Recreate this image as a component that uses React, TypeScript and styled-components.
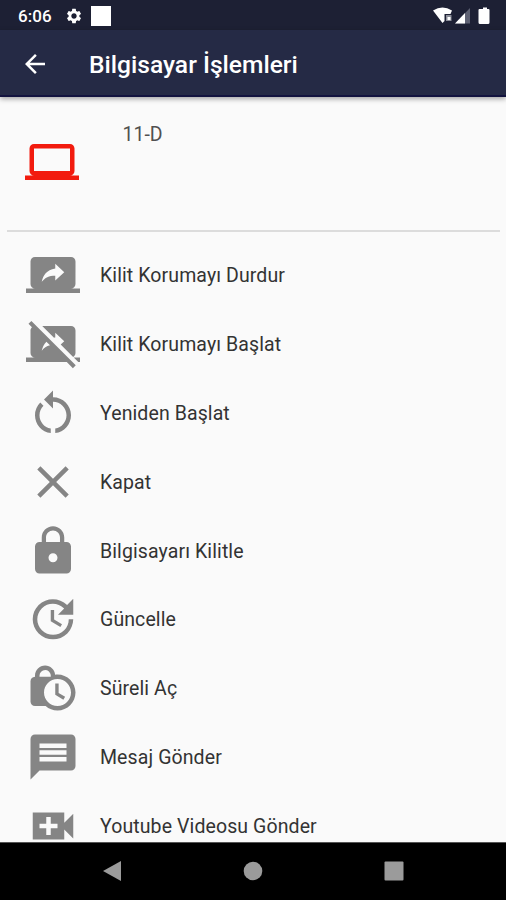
import React from 'react';
import styled, { createGlobalStyle } from 'styled-components';
import {
  MdArrowBack, MdClose, MdLaptop, MdLock, MdLockClock, MdMessage, MdRestartAlt,
  MdScreenShare, MdSettings, MdStopScreenShare, MdUpdate,
} from 'react-icons/md';

const GlobalStyle = createGlobalStyle`
  * { box-sizing: border-box; }
  body { margin: 0; background: #fafafa; font-family: Roboto, "Liberation Sans", sans-serif; }
`;

const Screen = styled.div`
  display: flex;
  flex-direction: column;
  width: 506px;
  height: 900px;
  overflow: hidden;
  background: #fafafa;
`;

const StatusBar = styled.div`
  flex: none;
  display: flex;
  align-items: center;
  height: 30px;
  padding: 1px 15px 0 18px;
  background: #1d2034;
  color: #fff;
`;

const Clock = styled.span`
  width: 47px;
  font-size: 17px;
  font-weight: 500;
  line-height: 28px;
  letter-spacing: 0.1px;
`;

const Notice = styled.div`
  width: 20px;
  height: 20px;
  margin-left: 8px;
  background: #fff;
`;

const StatusIcons = styled.svg`
  margin-left: auto;
`;

const AppBar = styled.header`
  flex: none;
  z-index: 1;
  display: flex;
  align-items: center;
  height: 67px;
  padding: 3px 20px 0;
  background: #252a45;
  border-bottom: 2px solid #13133f;
  box-shadow: 0 2px 5px rgba(0, 0, 0, 0.35);
  color: #fff;
`;

const Title = styled.h1`
  margin: 2px 0 0 39px;
  font-size: 24.6px;
  font-weight: 500;
  line-height: 32px;
  white-space: nowrap;
`;

const Device = styled.section`
  flex: none;
  display: flex;
  height: 134.5px;
  margin: 0 6px 0 7px;
  padding: 38px 0 0 18px;
  border-bottom: 2px solid #dcdcdc;
  color: #f21b0e;
`;

const DeviceName = styled.span`
  margin: -12px 0 0 43.5px;
  font-size: 19.5px;
  line-height: 24px;
  color: #505050;
`;

const Actions = styled.ul`
  flex: 1;
  min-height: 0;
  overflow: hidden;
  margin: 0;
  padding: 9px 0 0;
  list-style: none;
`;

const Action = styled.li`
  display: flex;
  align-items: center;
  gap: 20px;
  height: 68.9px;
  padding-left: 26px;
  color: #858585;
`;

const Label = styled.span`
  padding-top: 2px;
  font-size: 19.5px;
  line-height: 24px;
  letter-spacing: 0.1px;
  color: #333;
  white-space: nowrap;
`;

const NavBar = styled.nav`
  flex: none;
  display: flex;
  align-items: center;
  justify-content: space-between;
  height: 58.5px;
  padding: 0 102px;
  border-top: 1px solid #555;
  background: #000;
`;

function VideoCallSharp({ size }: { size: number }) {
  return (
    <svg width={size} height={size} viewBox="0 0 24 24" fill="currentColor">
      <path d="M17 10.500V6H3v12h14v-4.500l4 4v-11l-4 4zM14 13h-3v3H9v-3H6v-2h3V8h2v3h3v2z" />
    </svg>
  );
}

const actions: { icon: React.ComponentType<{ size: number }>; label: string }[] = [
  { icon: MdScreenShare, label: 'Kilit Korumayı Durdur' },
  { icon: MdStopScreenShare, label: 'Kilit Korumayı Başlat' },
  { icon: MdRestartAlt, label: 'Yeniden Başlat' },
  { icon: MdClose, label: 'Kapat' },
  { icon: MdLock, label: 'Bilgisayarı Kilitle' },
  { icon: MdUpdate, label: 'Güncelle' },
  { icon: MdLockClock, label: 'Süreli Aç' },
  { icon: MdMessage, label: 'Mesaj Gönder' },
  { icon: VideoCallSharp, label: 'Youtube Videosu Gönder' },
];

export default function App() {
  return (
    <Screen>
      <GlobalStyle />
      <StatusBar>
        <Clock>6:06</Clock>
        <MdSettings size={18} />
        <Notice />
        <StatusIcons width="58" height="20" viewBox="0 0 58 20" fill="#fff">
          <path d="M0 4.500Q9.500-1.500 19 4.500L17.500 8H11.500V15L9.500 17Z" />
          <path d="M13 9h5.500v6H13z" fill="#8c8e99" />
          <path d="M14.500 11h3v3h-3z" />
          <path d="M37 2v15.500H22z" fill="#5e6173" />
          <path d="M32 7v10.500H22z" />
          <path d="M48.500 3H50V1.500h4V3h1.500q1 0 1 1v12.500q0 1.500-1.500 1.500H47q-1.500 0-1.500-1.500V4q0-1 1-1z" />
        </StatusIcons>
      </StatusBar>
      <AppBar>
        <MdArrowBack size={30} />
        <Title>Bilgisayar İşlemleri</Title>
      </AppBar>
      <Device>
        <MdLaptop size={54} />
        <DeviceName>11-D</DeviceName>
      </Device>
      <Actions>
        {actions.map(({ icon: Icon, label }) => (
          <Action key={label}>
            <Icon size={54} />
            <Label>{label}</Label>
          </Action>
        ))}
      </Actions>
      <NavBar>
        <svg width="20" height="22" viewBox="0 0 20 22" fill="#9b9b9b"><path d="M1 11L19 1V21Z" /></svg>
        <svg width="20" height="20" viewBox="0 0 20 20" fill="#9b9b9b"><circle cx="10" cy="10" r="9.300" /></svg>
        <svg width="20" height="20" viewBox="0 0 20 20" fill="#9b9b9b"><rect x=".5" y=".5" width="19" height="19" rx="1" /></svg>
      </NavBar>
    </Screen>
  );
}
